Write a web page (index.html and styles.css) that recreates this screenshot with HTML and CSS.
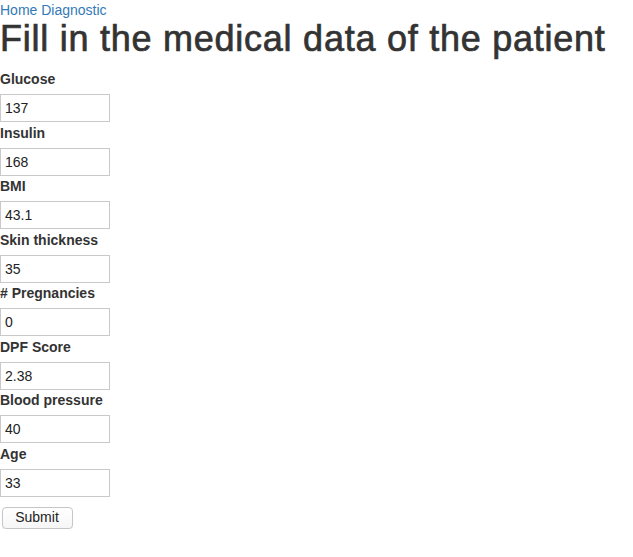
FILE: index.html
```html
<!DOCTYPE html>
<html>
<head>
<meta charset="utf-8">
<link rel="stylesheet" href="styles.css">
</head>
<body>
<nav class="nav"><a href="#">Home</a> <a href="#">Diagnostic</a></nav>
<h1 class="title">Fill in the medical data of the patient</h1>
<form class="form">
  <label class="lbl">Glucose</label>
  <input class="inp" type="text" value="137">
  <label class="lbl">Insulin</label>
  <input class="inp" type="text" value="168">
  <label class="lbl">BMI</label>
  <input class="inp" type="text" value="43.1">
  <label class="lbl">Skin thickness</label>
  <input class="inp" type="text" value="35">
  <label class="lbl"># Pregnancies</label>
  <input class="inp" type="text" value="0">
  <label class="lbl">DPF Score</label>
  <input class="inp" type="text" value="2.38">
  <label class="lbl">Blood pressure</label>
  <input class="inp" type="text" value="40">
  <label class="lbl">Age</label>
  <input class="inp" type="text" value="33">
  <button class="btn" type="button">Submit</button>
</form>
</body>
</html>
```
FILE: styles.css
```css
html, body {
  margin: 0;
  padding: 0;
  background: #fff;
}
body {
  font-family: "Liberation Sans", Arial, Helvetica, sans-serif;
  font-size: 14px;
  line-height: 20px;
  color: #333;
}
.nav {
  height: 20px;
}
.nav a {
  color: #337ab7;
  text-decoration: none;
}
.title {
  margin: 0 0 11px 0;
  font-size: 36px;
  line-height: 38px;
  font-weight: 400;
  letter-spacing: 0.75px;
  -webkit-text-stroke: 0.7px #333;
  color: #333;
  white-space: nowrap;
}
.form {
  display: flex;
  flex-direction: column;
  align-items: flex-start;
}
.lbl {
  display: block;
  font-weight: 700;
  line-height: 20px;
  margin-bottom: 5px;
}
.inp {
  box-sizing: border-box;
  width: 110px;
  height: 28px;
  margin: 0 0 0.57px 0;
  padding: 0 4px;
  border: 1px solid #c9c9c9;
  border-radius: 0;
  font-family: "Liberation Sans", Arial, Helvetica, sans-serif;
  font-size: 14px;
  color: #222;
  background: #fff;
  outline: none;
}
.btn {
  box-sizing: border-box;
  margin: 9px 0 0 2px;
  width: 71px;
  height: 22px;
  padding: 0 1px 1px 0;
  border: 1px solid #c6c6c6;
  border-radius: 4px;
  background: linear-gradient(#ffffff, #f6f6f6);
  box-shadow: 0 1px 1px rgba(0,0,0,0.08);
  font-family: "Liberation Sans", Arial, Helvetica, sans-serif;
  font-size: 14px;
  color: #222;
}
```
